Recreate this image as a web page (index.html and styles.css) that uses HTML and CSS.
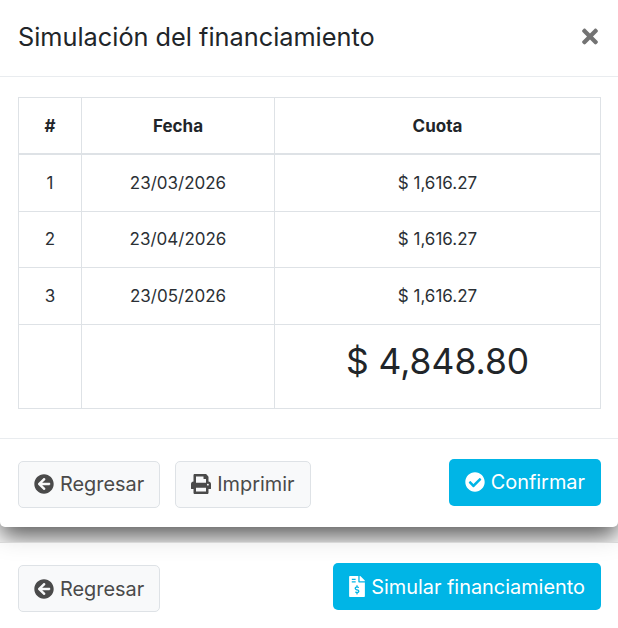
FILE: index.html
```html
<!DOCTYPE html>
<html lang="es">
<head>
  <meta charset="UTF-8">
  <title>Simulación del financiamiento</title>
  <link rel="stylesheet" href="styles.css">
</head>
<body>
  <div class="page-footer">
    <button class="btn btn-light">
      <svg class="icon" viewBox="0 0 512 512"><path d="M256 504C119 504 8 393 8 256S119 8 256 8s248 111 248 248-111 248-248 248zm28.9-143.6L209.4 288H392c13.3 0 24-10.7 24-24v-16c0-13.3-10.7-24-24-24H209.4l75.5-72.4c9.7-9.3 9.9-24.8.4-34.3l-11-10.9c-9.4-9.4-24.6-9.4-33.9 0L107.7 239c-9.4 9.4-9.4 24.6 0 33.9l132.7 132.7c9.4 9.4 24.6 9.4 33.9 0l11-10.9c9.5-9.5 9.3-25-.4-34.3z"/></svg>
      Regresar
    </button>
    <button class="btn btn-info btn-up">
      <svg class="icon icon-file" viewBox="0 0 384 512"><path d="M377 105L279.1 7c-4.5-4.5-10.6-7-17-7H256v128h128v-6.1c0-6.3-2.5-12.4-7-16.9zm-153 31V0H24C10.7 0 0 10.7 0 24v464c0 13.3 10.7 24 24 24h336c13.3 0 24-10.7 24-24V160H248c-13.2 0-24-10.8-24-24zM64 72c0-4.42 3.58-8 8-8h80c4.42 0 8 3.58 8 8v16c0 4.42-3.58 8-8 8H72c-4.42 0-8-3.58-8-8V72zm0 80v-16c0-4.42 3.58-8 8-8h80c4.42 0 8 3.58 8 8v16c0 4.42-3.58 8-8 8H72c-4.42 0-8-3.58-8-8zm144 263.88V440c0 4.42-3.58 8-8 8h-16c-4.42 0-8-3.58-8-8v-24.29c-11.29-.58-22.27-4.52-31.37-11.35-3.9-2.93-4.1-8.77-.57-12.14l11.75-11.21c2.77-2.64 6.89-2.76 10.13-.73 3.87 2.42 8.26 3.72 12.82 3.72h28.11c6.5 0 11.8-5.92 11.8-13.19 0-5.95-3.61-11.19-8.77-12.73l-45-13.5c-18.59-5.58-31.58-23.42-31.58-43.39 0-24.52 19.05-44.44 42.67-45.07V232c0-4.42 3.58-8 8-8h16c4.42 0 8 3.58 8 8v24.29c11.29.58 22.27 4.51 31.37 11.35 3.9 2.93 4.1 8.77.57 12.14l-11.75 11.21c-2.77 2.64-6.89 2.76-10.13.73-3.87-2.43-8.26-3.72-12.82-3.72h-28.11c-6.5 0-11.8 5.92-11.8 13.19 0 5.95 3.61 11.19 8.77 12.73l45 13.5c18.59 5.58 31.58 23.42 31.58 43.39 0 24.53-19.05 44.44-42.67 45.07z"/></svg>
      Simular financiamiento
    </button>
  </div>

  <div class="modal">
    <div class="modal-header">
      <h2 class="modal-title">Simulación del financiamiento</h2>
      <svg class="close" viewBox="0 0 352 512"><path d="M242.72 256l100.07-100.07c12.28-12.28 12.28-32.19 0-44.48l-22.24-22.24c-12.28-12.28-32.19-12.28-44.48 0L176 189.28 75.93 89.21c-12.28-12.28-32.19-12.28-44.48 0L9.21 111.45c-12.28 12.28-12.28 32.19 0 44.48L109.28 256 9.21 356.07c-12.28 12.28-12.28 32.19 0 44.48l22.24 22.24c12.28 12.28 32.2 12.28 44.48 0L176 322.72l100.07 100.07c12.28 12.28 32.2 12.28 44.48 0l22.24-22.24c12.28-12.28 12.28-32.19 0-44.48L242.72 256z"/></svg>
    </div>
    <div class="modal-body">
      <table class="table">
        <thead>
          <tr>
            <th class="col-num">#</th>
            <th class="col-date">Fecha</th>
            <th>Cuota</th>
          </tr>
        </thead>
        <tbody>
          <tr>
            <td>1</td>
            <td>23/03/2026</td>
            <td>$ 1,616.27</td>
          </tr>
          <tr>
            <td>2</td>
            <td>23/04/2026</td>
            <td>$ 1,616.27</td>
          </tr>
          <tr>
            <td>3</td>
            <td>23/05/2026</td>
            <td>$ 1,616.27</td>
          </tr>
          <tr class="total-row">
            <td></td>
            <td></td>
            <td class="total">$ 4,848.80</td>
          </tr>
        </tbody>
      </table>
    </div>
    <div class="modal-footer">
      <button class="btn btn-light">
        <svg class="icon" viewBox="0 0 512 512"><path d="M256 504C119 504 8 393 8 256S119 8 256 8s248 111 248 248-111 248-248 248zm28.9-143.6L209.4 288H392c13.3 0 24-10.7 24-24v-16c0-13.3-10.7-24-24-24H209.4l75.5-72.4c9.7-9.3 9.9-24.8.4-34.3l-11-10.9c-9.4-9.4-24.6-9.4-33.9 0L107.7 239c-9.4 9.4-9.4 24.6 0 33.9l132.7 132.7c9.4 9.4 24.6 9.4 33.9 0l11-10.9c9.5-9.5 9.3-25-.4-34.3z"/></svg>
        Regresar
      </button>
      <button class="btn btn-light">
        <svg class="icon" viewBox="0 0 512 512"><path d="M448 192V77.25c0-8.49-3.37-16.62-9.37-22.63L393.37 9.37c-6-6-14.14-9.37-22.63-9.37H96C78.33 0 64 14.33 64 32v160c-35.35 0-64 28.65-64 64v112c0 8.84 7.16 16 16 16h48v96c0 17.67 14.33 32 32 32h320c17.67 0 32-14.33 32-32v-96h48c8.84 0 16-7.16 16-16V256c0-35.35-28.65-64-64-64zm-64 256H128v-96h256v96zm0-224H128V64h192v48c0 8.84 7.16 16 16 16h48v96zm48 72c-13.25 0-24-10.75-24-24 0-13.26 10.75-24 24-24s24 10.74 24 24c0 13.25-10.75 24-24 24z"/></svg>
        Imprimir
      </button>
      <button class="btn btn-info btn-up btn-right">
        <svg class="icon" viewBox="0 0 512 512"><path d="M504 256c0 136.967-111.033 248-248 248S8 392.967 8 256 119.033 8 256 8s248 111.033 248 248zM227.314 387.314l184-184c6.248-6.248 6.248-16.379 0-22.627l-22.627-22.627c-6.248-6.249-16.379-6.249-22.628 0L216 308.118l-70.059-70.059c-6.248-6.248-16.379-6.248-22.628 0l-22.627 22.627c-6.248 6.248-6.248 16.379 0 22.627l104 104c6.249 6.249 16.379 6.249 22.628.001z"/></svg>
        Confirmar
      </button>
    </div>
  </div>
</body>
</html>
```

FILE: styles.css
```css
html, body {
  height: 100%;
}

body {
  margin: 0;
  position: relative;
  overflow: hidden;
  background-color: #fff;
  color: #212529;
  font-family: "Inter", sans-serif;
  font-size: 17px;
}

.modal {
  position: absolute;
  top: 0;
  left: 0;
  right: 0;
  height: 527px;
  background-color: #fff;
  border-radius: 0 0 5px 5px;
  box-shadow: 0 10px 24px rgba(0, 0, 0, 0.65);
}

.modal-header {
  display: flex;
  justify-content: space-between;
  align-items: center;
  height: 72px;
  padding: 0 18px 4px;
  border-bottom: 1px solid #e9ecef;
}

.modal-title {
  margin: 0;
  font-size: 25.3px;
  font-weight: 400;
}

.close {
  width: 16px;
  height: 23px;
  fill: #737373;
  margin-right: 2px;
}

.modal-body {
  padding: 20px 17px 29px 18px;
}

.table {
  width: 100%;
  border-collapse: collapse;
  text-align: center;
}

.table th,
.table td {
  border: 1px solid #dee2e6;
  padding: 0;
  height: 55.5px;
  color: #2b3035;
}

.table th {
  height: 55px;
  font-weight: 700;
  font-size: 17px;
  color: #212529;
  border-bottom-width: 2px;
}

.col-num {
  width: 62px;
}

.col-date {
  width: 192px;
}

.table .total-row td {
  height: 83px;
}

.table .total {
  padding-bottom: 10px;
  box-sizing: border-box;
  font-size: 35.4px;
  color: #212529;
}

.modal-footer {
  display: flex;
  gap: 15px;
  padding: 22px 17px 0 18px;
  border-top: 1px solid #e9ecef;
}

.btn {
  display: inline-flex;
  align-items: center;
  justify-content: center;
  gap: 6px;
  height: 47px;
  padding: 0 15px;
  border: 1px solid transparent;
  border-radius: 5px;
  font-family: inherit;
  font-size: 19.9px;
}

.btn-light {
  background-color: #f8f9fa;
  border-color: #dee2e6;
  color: #4a4a4a;
  fill: #4a4a4a;
}

.btn-info {
  background-color: #00b5e6;
  color: #fff;
  fill: #fff;
}

.btn-up {
  margin-top: -2px;
}

.btn-right {
  margin-left: auto;
}

.icon {
  width: 20px;
  height: 20px;
}

.icon-file {
  width: 16px;
  height: 21px;
}

.page-footer {
  position: absolute;
  top: 542px;
  left: 0;
  right: 0;
  z-index: 1;
  display: flex;
  justify-content: space-between;
  align-items: flex-start;
  height: 86px;
  padding: 22px 17px 0 18px;
  box-sizing: border-box;
  border-top: 1px solid #d8d8d8;
  background-color: rgba(255, 255, 255, 0.75);
}
```
